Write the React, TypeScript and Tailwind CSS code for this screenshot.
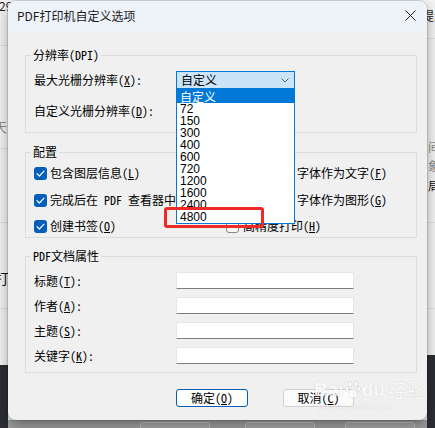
import React from 'react';

const ui = "font-['Noto_Sans_Mono_CJK_SC','Liberation_Mono','Noto_Sans_CJK_SC',monospace]";
const sans = "font-['Noto_Sans_CJK_SC','Noto_Sans',sans-serif]";
const num = "font-['Liberation_Sans','Noto_Sans_CJK_SC',sans-serif]";

const dpiOptions = ['72', '150', '300', '400', '600', '720', '1200', '1600', '2400', '4800'];

function Key({ text, k, colon }: { text: string; k: string; colon?: boolean }) {
  return (
    <span className="whitespace-nowrap">
      {text}(<span className="underline underline-offset-[1px]">{k}</span>){colon ? ':' : ''}
    </span>
  );
}

function Check({ checked }: { checked: boolean }) {
  if (!checked) {
    return <span className="w-[13px] h-[13px] shrink-0 rounded-[3px] border border-[#858585] bg-[#f6f6f6]" />;
  }
  return (
    <span className="w-[13px] h-[13px] shrink-0 rounded-[3px] bg-[#005fb8] flex items-center justify-center">
      <svg width="9" height="7" viewBox="0 0 9 7" fill="none">
        <path d="M1 3.6 L3.4 6 L8 1.2" stroke="#fff" strokeWidth="1.2" strokeLinecap="round" strokeLinejoin="round" />
      </svg>
    </span>
  );
}

function TextBox() {
  return <div className="w-[178px] h-[17px] bg-white border border-[#e6e6e6] border-b-[#7e7e7e] rounded-[1px]" />;
}

function Backdrop() {
  return (
    <>
      {/* left edge of the window behind */}
      <div className="absolute left-0 top-0 w-[8px] h-[428px] bg-[#f3f3f3]">
        <span className={`absolute left-[-1px] top-[-3px] text-[12px] text-[#222] ${sans}`}>29</span>
        <div className="absolute left-0 top-[45px] w-[8px] h-px bg-[#e0e0e0]" />
        <span className={`absolute left-[-6px] top-[117px] text-[13px] text-[#8a8a8a] ${sans}`}>天</span>
        <div className="absolute left-0 top-[148px] w-[8px] h-px bg-[#dedede]" />
        <div className="absolute left-0 top-[222px] w-[8px] h-px bg-[#dedede]" />
        <span className={`absolute left-[-5px] top-[268px] text-[14px] text-[#111] ${sans}`}>打</span>
        <div className="absolute left-0 top-[308px] w-[8px] h-px bg-[#dedede]" />
        <div className="absolute left-0 top-[365px] w-[8px] h-[63px] bg-[#2a2d33]" />
      </div>
      {/* right edge of the window behind */}
      <div className="absolute left-[427px] top-0 w-[8px] h-[428px] bg-[#f3f3f3]">
        <span className={`absolute left-[-5px] top-[7px] text-[12px] text-[#222] whitespace-nowrap ${sans}`}>提示</span>
        <div className="absolute left-0 top-[38px] w-[8px] h-px bg-[#dedede]" />
        <span className={`absolute left-[1px] top-[138px] text-[12px] text-[#8a8a8a] ${sans}`}>间</span>
        <span className={`absolute left-[1px] top-[157px] text-[12px] text-[#8a8a8a] ${sans}`}>象</span>
        <span className={`absolute left-[1px] top-[177px] text-[12px] text-[#111] ${sans}`}>局</span>
        <div className="absolute left-0 top-[222px] w-[8px] h-px bg-[#dedede]" />
        <div className="absolute left-0 top-[308px] w-[8px] h-px bg-[#dedede]" />
        <div className="absolute left-0 top-[355px] w-[8px] h-[73px] bg-[#2a2d33]" />
      </div>
      {/* strip below the dialog */}
      <div className="absolute left-[8px] top-[420px] w-[419px] h-[8px] bg-[#a2a2a2]">
        <div className="absolute left-[132px] top-[2px] w-[70px] h-[10px] rounded-[3px] border border-[#c4c4c4] bg-[#aaaaaa]" />
        <div className="absolute left-[237px] top-[2px] w-[70px] h-[10px] rounded-[3px] border border-[#c4c4c4] bg-[#aaaaaa]" />
        <div className="absolute left-[337px] top-[2px] w-[70px] h-[10px] rounded-[3px] border border-[#c4c4c4] bg-[#aaaaaa]" />
      </div>
    </>
  );
}

export default function App() {
  return (
    <div className={`relative w-[435px] h-[428px] overflow-hidden bg-[#f3f3f3] text-black ${ui}`}>
      <Backdrop />

      {/* dialog window */}
      <div className="absolute left-[8px] top-[1px] w-[419px] h-[419px] rounded-[8px] overflow-hidden bg-[#f0f0f0] shadow-[0_0_0_1px_rgba(0,0,0,0.12),0_6px_14px_rgba(0,0,0,0.35)] flex flex-col">
        {/* title bar */}
        <div className="h-[30px] shrink-0 bg-[#eef2f9] flex items-center justify-between pl-[9px] pr-[10px] pb-[1px]">
          <span className={`text-[12px] text-[#1a1a1a] ${sans}`}>PDF打印机自定义选项</span>
          <svg width="11" height="11" viewBox="0 0 11 11" className="mr-[1px]">
            <path d="M0.5 0.5 L10.5 10.5 M10.5 0.5 L0.5 10.5" stroke="#1c1c1c" strokeWidth="1" />
          </svg>
        </div>

        {/* body */}
        <div className="relative flex-1 pt-[16px] pl-[17px] pr-[10px] text-[12px] leading-[16px]">
          {/* 分辨率 */}
          <fieldset className="border border-[#dcdcdc] px-[8px]">
            <legend className="ml-[-3px] px-[2px] leading-[16px]">分辨率(DPI)</legend>
            <div className="pt-[8px] pb-[12px]">
              <div className="flex items-center h-[18px]">
                <div className="w-[142px]">
                  <Key text="最大光栅分辨率" k="X" colon />
                </div>
                <div className="relative w-[119px] h-[18px]">
                  <div className="h-[18px] bg-[#cce4f7] border border-[#0078d4] flex items-center justify-between pl-[4px] pr-[5px]">
                    <span className={`text-[12px] ${sans}`}>自定义</span>
                    <svg width="8" height="5" viewBox="0 0 8 5">
                      <path d="M0.5 0.5 L4 4 L7.5 0.5" stroke="#606060" strokeWidth="1" fill="none" />
                    </svg>
                  </div>
                  {/* open drop-down list */}
                  <div className="absolute left-0 top-[18px] z-10 w-[119px] bg-white border border-[#0078d4] flex flex-col">
                    <div className={`h-[13px] bg-[#0078d7] text-white pl-[3px] text-[12px] leading-[13px] ${sans}`}>自定义</div>
                    {dpiOptions.map((v) => (
                      <div key={v} className={`h-[12px] pl-[3px] text-[12px] leading-[12px] ${num}`}>
                        {v}
                      </div>
                    ))}
                  </div>
                </div>
              </div>
              <div className="flex items-center h-[18px] mt-[13px]">
                <div className="w-[142px]">
                  <Key text="自定义光栅分辨率" k="D" colon />
                </div>
                <div className="w-[119px] h-[18px] bg-white border border-[#e6e6e6] border-b-[#7e7e7e]" />
              </div>
            </div>
          </fieldset>

          {/* 配置 */}
          <fieldset className="mt-[11px] border border-[#dcdcdc] px-[8px]">
            <legend className="ml-[-3px] px-[2px] leading-[16px]">配置</legend>
            <div className="pt-[5px] pb-[3px] flex flex-col">
              <div className="flex h-[16px]">
                <div className="w-[192px] flex items-center gap-[3px] whitespace-nowrap">
                  <Check checked />
                  <Key text="包含图层信息" k="L" />
                </div>
                <div className="flex items-center gap-[4px] whitespace-nowrap">
                  <Check checked />
                  <Key text="TrueType 字体作为文字" k="F" />
                </div>
              </div>
              <div className="flex h-[16px] mt-[11px]">
                <div className="w-[192px] flex items-center gap-[3px] whitespace-nowrap overflow-hidden">
                  <Check checked />
                  <span>完成后在 PDF 查看器中打开</span>
                </div>
                <div className="flex items-center gap-[4px] whitespace-nowrap">
                  <Check checked={false} />
                  <Key text="TrueType 字体作为图形" k="G" />
                </div>
              </div>
              <div className="flex h-[16px] mt-[10px]">
                <div className="w-[192px] flex items-center gap-[3px] whitespace-nowrap">
                  <Check checked />
                  <Key text="创建书签" k="O" />
                </div>
                <div className="flex items-center gap-[4px] whitespace-nowrap">
                  <Check checked={false} />
                  <Key text="高精度打印" k="H" />
                </div>
              </div>
            </div>
          </fieldset>

          {/* PDF文档属性 */}
          <fieldset className="mt-[10px] border border-[#dcdcdc] px-[8px]">
            <legend className="ml-[-3px] px-[2px] leading-[16px]">PDF文档属性</legend>
            <div className="pt-[8px] pb-[8px] flex flex-col gap-[8px]">
              {[
                ['标题', 'T'],
                ['作者', 'A'],
                ['主题', 'S'],
                ['关键字', 'K'],
              ].map(([t, k]) => (
                <div key={k} className="flex items-center h-[17px]">
                  <div className="w-[142px]">
                    <Key text={t} k={k} colon />
                  </div>
                  <TextBox />
                </div>
              ))}
            </div>
          </fieldset>

          {/* buttons */}
          <div className="mt-[16px] flex pl-[151px] gap-[35px]">
            <button className="w-[72px] h-[18px] rounded-[3px] border border-[#005fb8] bg-[#fdfdfd] text-[12px] leading-[16px] flex items-center justify-center">
              <Key text="确定" k="O" />
            </button>
            <button className="w-[71px] h-[18px] rounded-[3px] border border-[#d0d0d0] bg-[#fbfbfb] text-[12px] leading-[16px] flex items-center justify-center">
              <Key text="取消" k="C" />
            </button>
          </div>

          {/* red annotation box */}
          <div className="absolute left-[156px] top-[176px] w-[100px] h-[21px] z-20 border-[3px] border-[#ee2b25] rounded-[3px]" />
        </div>
      </div>

      {/* watermark */}
      <div className="absolute left-[314px] top-[379px] flex flex-col items-start pointer-events-none opacity-70">
        <div className={`flex items-center text-[19px] leading-[22px] font-bold text-white [text-shadow:0_0_1px_rgba(0,0,0,0.25)] ${num}`}>
          <span>Bai</span>
          <svg width="16" height="18" viewBox="0 0 16 18" className="mx-[1px]">
            <g fill="#fff" stroke="rgba(0,0,0,0.2)" strokeWidth="0.6">
              <ellipse cx="5" cy="3" rx="2" ry="2.6" />
              <ellipse cx="11" cy="3" rx="2" ry="2.6" />
              <ellipse cx="2" cy="8" rx="1.8" ry="2.3" />
              <ellipse cx="14" cy="8" rx="1.8" ry="2.3" />
              <path d="M8 8 C5 8 3 13 4 15.5 C5 17.5 11 17.5 12 15.5 C13 13 11 8 8 8 Z" />
            </g>
          </svg>
          <span>du</span>
          <span className={`ml-[3px] font-normal ${sans}`}>经验</span>
        </div>
        <span className="ml-[4px] text-[10px] leading-[12px] text-white [text-shadow:0_0_1px_rgba(0,0,0,0.25)] font-['Liberation_Serif',serif]">
          jingyan.baidu.com
        </span>
      </div>
    </div>
  );
}
